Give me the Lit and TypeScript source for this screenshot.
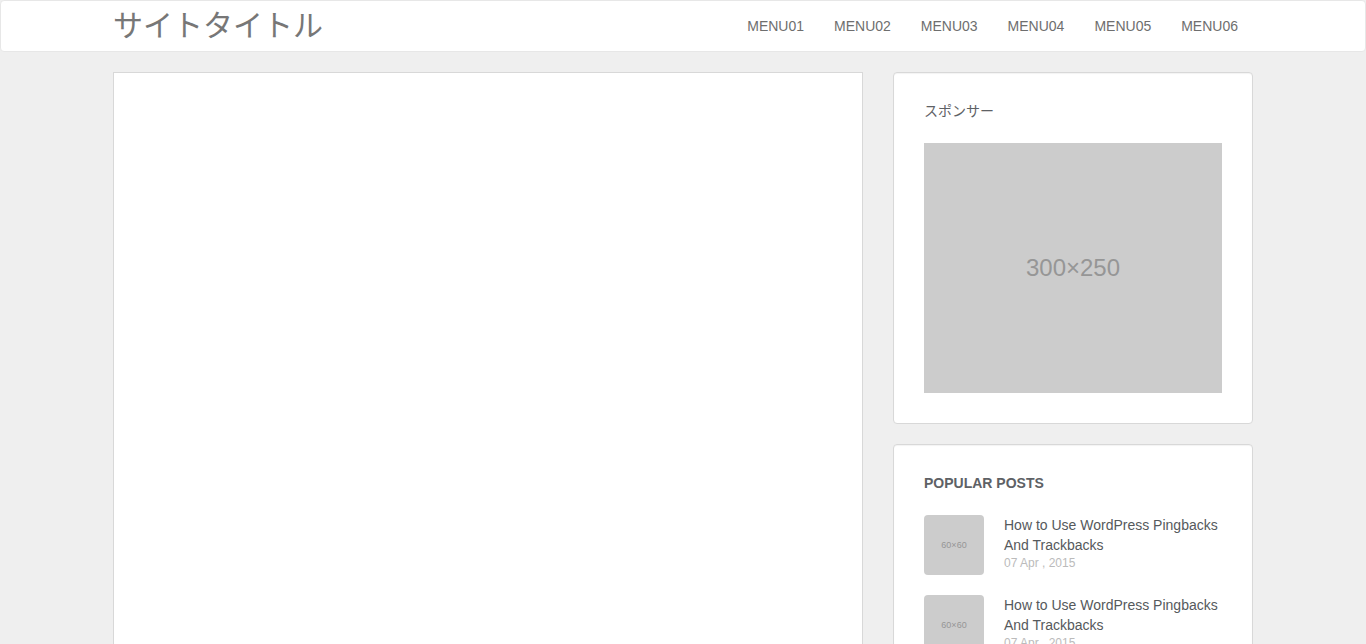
import { LitElement, html, css } from "lit";
import { customElement, property } from "lit/decorators.js";

interface Post {
  title: string;
  date: string;
}

const MENU = ["MENU01", "MENU02", "MENU03", "MENU04", "MENU05", "MENU06"];

const POSTS: Post[] = [
  { title: "How to Use WordPress Pingbacks And Trackbacks", date: "07 Apr , 2015" },
  { title: "How to Use WordPress Pingbacks And Trackbacks", date: "07 Apr , 2015" },
];

@customElement("side-widget")
export class SideWidget extends LitElement {
  @property() heading = "";

  static styles = css`
    :host {
      display: block;
      box-sizing: border-box;
      padding: 30px;
      background: #fff;
      border: 1px solid #d8d8d8;
      border-radius: 4px;
      box-shadow: inset 0 1px 1px rgba(0, 0, 0, 0.05);
    }
    .heading {
      margin: 0 0 20px;
      padding-bottom: 4px;
      font-size: 14px;
      line-height: 16px;
      font-weight: 700;
      color: #5e6165;
    }
    :host([light]) .heading {
      font-weight: 400;
    }
  `;

  render() {
    return html`<h2 class="heading">${this.heading}</h2><slot></slot>`;
  }
}

@customElement("app-root")
export class AppRoot extends LitElement {
  static styles = css`
    :host {
      display: block;
      height: 100vh;
      overflow-y: auto;
      scrollbar-width: none;
      background: #efefef;
      color: #55595c;
      font-family: "Liberation Sans", "Noto Sans CJK JP", sans-serif;
      font-size: 14px;
      line-height: 20px;
    }
    .bar {
      background: #fff;
      border: 1px solid #e7e7e7;
      border-radius: 4px;
      margin-bottom: 20px;
    }
    .container {
      box-sizing: border-box;
      max-width: 1170px;
      margin: 0 auto;
      padding: 0 15px;
    }
    .bar-inner {
      display: flex;
      justify-content: space-between;
      align-items: center;
    }
    .brand {
      font-size: 30px;
      line-height: 50px;
      color: #777;
      text-decoration: none;
    }
    .menu {
      display: flex;
      list-style: none;
      margin: 0;
      padding: 0;
    }
    .menu-link {
      display: block;
      padding: 15px;
      color: #6e6e6e;
      text-decoration: none;
    }
    .columns {
      display: grid;
      grid-template-columns: minmax(0, 25fr) minmax(0, 12fr);
      gap: 30px;
    }
    .content {
      min-height: 640px;
      background: #fff;
      border: 1px solid #d8d8d8;
    }
    .side {
      display: flex;
      flex-direction: column;
      gap: 20px;
    }
    .placeholder {
      display: flex;
      align-items: center;
      justify-content: center;
      background: #ccc;
      color: #969696;
    }
    .ad {
      height: 250px;
      font-size: 24px;
    }
    .thumb {
      flex: none;
      width: 60px;
      height: 60px;
      border-radius: 4px;
      font-size: 9px;
    }
    .posts {
      display: flex;
      flex-direction: column;
      gap: 20px;
      list-style: none;
      margin: 0;
      padding: 0;
    }
    .post {
      display: flex;
      gap: 20px;
    }
    .post-title {
      display: block;
      color: #55595c;
      text-decoration: none;
    }
    .date {
      display: block;
      font-size: 12px;
      line-height: 16px;
      color: #bbb;
    }
  `;

  render() {
    return html`
      <header class="bar">
        <div class="container bar-inner">
          <a class="brand" href="#">サイトタイトル</a>
          <nav>
            <ul class="menu">
              ${MENU.map((m) => html`<li><a class="menu-link" href="#">${m}</a></li>`)}
            </ul>
          </nav>
        </div>
      </header>
      <div class="container columns">
        <main class="content"></main>
        <aside class="side">
          <side-widget light heading="スポンサー">
            <div class="placeholder ad">300×250</div>
          </side-widget>
          <side-widget heading="POPULAR POSTS">
            <ul class="posts">
              ${POSTS.map(
                (p) => html`<li class="post">
                  <div class="placeholder thumb">60×60</div>
                  <div>
                    <a class="post-title" href="#">${p.title}</a>
                    <time class="date">${p.date}</time>
                  </div>
                </li>`
              )}
            </ul>
          </side-widget>
        </aside>
      </div>
    `;
  }
}
